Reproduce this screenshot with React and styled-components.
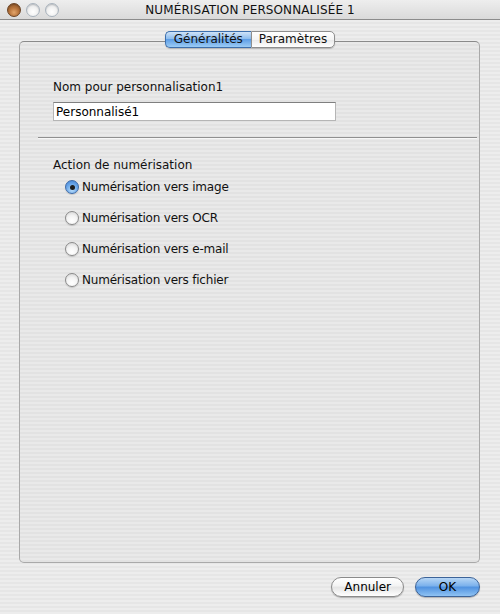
import React, { useState } from 'react'
import styled, { createGlobalStyle } from "styled-components";

const GlobalStyle = createGlobalStyle`
  html, body { margin:0; padding:0; }
  body { font-family:"DejaVu Sans","Liberation Sans",sans-serif; }
`

const stripes = `repeating-linear-gradient(to bottom, #ededed 0px, #ededed 2px, #e6e6e6 2px, #e6e6e6 4px)`
const innerStripes = `repeating-linear-gradient(to bottom, #e9e9e9 0px, #e9e9e9 2px, #e2e2e2 2px, #e2e2e2 4px)`

const actions = [
  "Numérisation vers image",
  "Numérisation vers OCR",
  "Numérisation vers e-mail",
  "Numérisation vers fichier",
]

const App = () => {
  const [tab, setTab] = useState(0)
  const [action, setAction] = useState(0)
  const [name, setName] = useState("Personnalisé1")
  return (
    <>
      <GlobalStyle />
      <Window>
        <TitleBar>
          <Lights>
            <Light $close />
            <Light />
            <Light />
          </Lights>
          <Title>NUMÉRISATION PERSONNALISÉE 1</Title>
        </TitleBar>
        <Body>
          <Tabs>
            <Tab $active={tab === 0} $first onClick={() => setTab(0)}>Généralités</Tab>
            <Tab $active={tab === 1} onClick={() => setTab(1)}>Paramètres</Tab>
          </Tabs>
          <TabBox>
            <Label>Nom pour personnalisation1</Label>
            <Field value={name} onChange={e => setName(e.target.value)} />
            <Separator />
            <Label className="action">Action de numérisation</Label>
            <RadioList>
              {actions.map((a, i) => (
                <RadioRow key={a} onClick={() => setAction(i)}>
                  <Radio $checked={action === i} />
                  <span>{a}</span>
                </RadioRow>
              ))}
            </RadioList>
          </TabBox>
          <Buttons>
            <PushButton>Annuler</PushButton>
            <PushButton $default>OK</PushButton>
          </Buttons>
        </Body>
      </Window>
    </>
  )
}

export default App;

const Window = styled.div`
  width:500px;
  height:614px;
  display:flex;
  flex-direction:column;
  background:${stripes};
  overflow:hidden;
`

const TitleBar = styled.div`
  height:20px;
  display:flex;
  align-items:center;
  position:relative;
  background:linear-gradient(to bottom, #eeeeee, #dadada);
  border-bottom:1px solid #8c8c8c;
`

const Lights = styled.div`
  display:flex;
  gap:5px;
  padding-left:7px;
  padding-top:1px;
`

const Light = styled.div`
  width:14px;
  height:14px;
  border-radius:50%;
  box-sizing:border-box;
  border:1px solid ${p => p.$close ? "#6b4222" : "#a9b3bd"};
  background:${p => p.$close
    ? "radial-gradient(circle at 50% 70%, #e3a56a 0%, #b7743c 45%, #7d4b24 100%)"
    : "radial-gradient(circle at 50% 65%, #ffffff 0%, #f0f0f0 50%, #c9cdd2 100%)"};
  box-shadow:inset 0 1px 1px rgba(0,0,0,0.15);
`

const Title = styled.div`
  position:absolute;
  left:0;
  right:0;
  text-align:center;
  font-size:12px;
  color:#111;
  letter-spacing:0.1px;
  pointer-events:none;
`

const Body = styled.div`
  flex:1;
  display:flex;
  flex-direction:column;
  padding:11px 20px 17px 19px;
`

const Tabs = styled.div`
  display:flex;
  justify-content:center;
  position:relative;
  z-index:1;
  height:17px;
  padding-left:1px;
`

const Tab = styled.div`
  height:17px;
  box-sizing:border-box;
  padding:0 ${p => p.$first ? "8px" : "7px"};
  font-size:12px;
  line-height:15px;
  color:#111;
  cursor:default;
  border:1px solid ${p => p.$active ? "#3c6fad" : "#8e8e8e"};
  border-radius:${p => p.$first ? "5px 0 0 5px" : "0 5px 5px 0"};
  ${p => p.$first ? "border-right:none;" : ""}
  background:${p => p.$active
    ? "linear-gradient(to bottom, #cfe3f8 0%, #8dbdee 45%, #5e9ee6 50%, #9cccf5 100%)"
    : "linear-gradient(to bottom, #ffffff 0%, #f4f4f4 50%, #e8e8e8 51%, #ffffff 100%)"};
  box-shadow:0 1px 1px rgba(0,0,0,0.2);
`

const TabBox = styled.div`
  margin-top:-7px;
  height:522px;
  box-sizing:border-box;
  border:1px solid #a9a9a9;
  border-top-color:#8a8a8a;
  border-radius:5px;
  background:${innerStripes};
  padding:38px 2px 0 33px;
  display:flex;
  flex-direction:column;
  align-items:flex-start;

  .action{
    margin-top:19px;
  }
`

const Label = styled.div`
  font-size:12px;
  line-height:14px;
  color:#111;
`

const Field = styled.input`
  margin-top:8px;
  width:283px;
  height:19px;
  box-sizing:border-box;
  border:1px solid #b5b5b5;
  border-top-color:#7f7f7f;
  background:#fff;
  font-family:inherit;
  font-size:12px;
  color:#000;
  padding:0 2px;
  outline:none;
`

const Separator = styled.div`
  align-self:stretch;
  margin:16px 0 0 -15px;
  height:0;
  border-top:1px solid #8f8f8f;
  border-bottom:1px solid #f6f6f6;
`

const RadioList = styled.div`
  display:flex;
  flex-direction:column;
  gap:17px;
  margin-top:8px;
  margin-left:12px;
`

const RadioRow = styled.div`
  display:flex;
  align-items:center;
  gap:3px;
  height:14px;
  font-size:12px;
  letter-spacing:-0.2px;
  color:#111;
  cursor:default;
`

const Radio = styled.div`
  width:14px;
  height:14px;
  border-radius:50%;
  box-sizing:border-box;
  position:relative;
  border:1px solid ${p => p.$checked ? "#3d6aa8" : "#8a8a8a"};
  background:${p => p.$checked
    ? "radial-gradient(circle at 50% 75%, #b6dcfb 0%, #6aa6e8 55%, #3f7fd1 100%)"
    : "radial-gradient(circle at 50% 75%, #ffffff 0%, #f3f3f3 50%, #cfcfcf 100%)"};
  box-shadow:0 1px 1px rgba(0,0,0,0.15);
  &::after{
    content:"";
    display:${p => p.$checked ? "block" : "none"};
    position:absolute;
    left:50%;
    top:50%;
    width:5px;
    height:5px;
    margin:-2.5px 0 0 -2.5px;
    border-radius:50%;
    background:#1c1c1c;
  }
`

const Buttons = styled.div`
  display:flex;
  justify-content:flex-end;
  gap:11px;
  margin-top:14px;
  padding-right:0;
`

const PushButton = styled.button`
  height:20px;
  min-width:${p => p.$default ? "65px" : "71px"};
  padding:0 12px;
  border-radius:10px;
  font-family:inherit;
  font-size:12px;
  color:#000;
  cursor:default;
  border:1px solid ${p => p.$default ? "#3c6398" : "#8b8b8b"};
  background:${p => p.$default
    ? "linear-gradient(to bottom, #b7d6f5 0%, #79b0ec 45%, #4f91e0 50%, #8fc3f3 100%)"
    : "linear-gradient(to bottom, #ffffff 0%, #f3f3f3 45%, #e4e4e4 50%, #ffffff 100%)"};
  box-shadow:0 1px 1px rgba(0,0,0,0.25);
`
